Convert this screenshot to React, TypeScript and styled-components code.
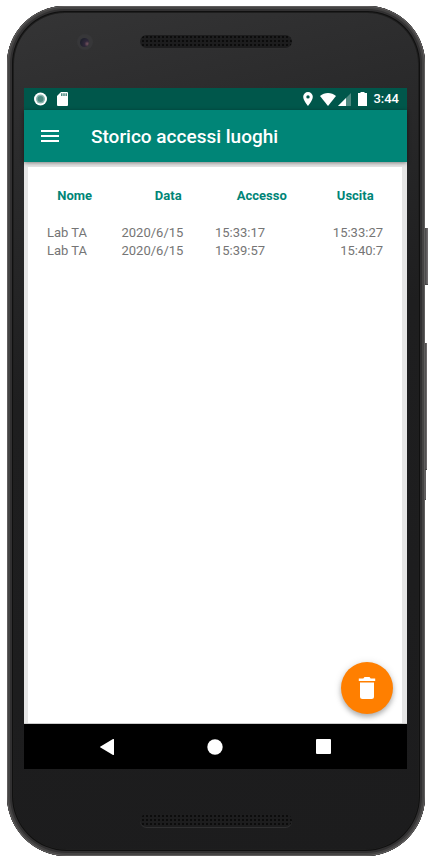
import React from "react";
import styled, { createGlobalStyle } from "styled-components";

const GlobalStyle = createGlobalStyle`
  * { box-sizing: border-box; }
  body { margin: 0; background: #fff; font-family: Roboto, "Noto Sans", sans-serif; }
  button { border: 0; padding: 0; background: none; color: inherit; font: inherit; cursor: pointer; }
  svg { display: block; }
`;

const Page = styled.div`
  display: flex;
  min-height: 100vh;
  padding: 6px 3px 1px 7px;
`;

const Phone = styled.div`
  position: relative;
  flex: 1;
  display: flex;
  flex-direction: column;
  padding: 0 18px 0 17px;
  border-radius: 58px 58px 60px 60px;
  background: linear-gradient(165deg, #353536 0%, #29292a 20%, #1e1e1f 42%, #1c1c1d 100%);
  box-shadow:
    inset 0 0 0 1px #5f5d5d,
    inset 0 0 0 3px #444343,
    inset 0 0 0 5px #313031,
    inset 0 0 0 6px #101010,
    inset 0 0 0 7px #1e1e1e;
`;

const Bezel = styled.div<{ $height: number; $top: number }>`
  display: grid;
  grid-template-columns: 1fr 152px 1fr;
  justify-items: center;
  align-items: start;
  height: ${(p) => p.$height}px;
  padding-top: ${(p) => p.$top}px;
`;

const Camera = styled.div`
  display: grid;
  place-items: center;
  width: 16px;
  height: 16px;
  margin: -1px 0 0 6px;
  border-radius: 50%;
  background: #373739;
`;

const Lens = styled.div`
  width: 9px;
  height: 9px;
  border-radius: 50%;
  background: radial-gradient(circle at 80% 65%, #75545e 0, #30283b 30%, #20212d 70%);
`;

const Speaker = styled.div`
  grid-column: 2;
  width: 100%;
  height: 13px;
  border-radius: 7px;
  background: radial-gradient(circle, #0c0c0c 1px, transparent 1px) 1px 0 / 4px 4px #1d1d1e;
  box-shadow: 0 1px 0 #303031;
`;

const SideButton = styled.div<{ $top: number; $height: number; $width: number }>`
  position: absolute;
  left: 100%;
  top: ${(p) => p.$top}px;
  width: ${(p) => p.$width}px;
  height: ${(p) => p.$height}px;
  background: linear-gradient(90deg, #444, #777375);
  border-bottom: 1px solid #444;
`;

const Screen = styled.div`
  flex: 1;
  display: flex;
  flex-direction: column;
  background: #e6e6e6;
`;

const StatusBar = styled.div`
  display: flex;
  justify-content: space-between;
  align-items: center;
  height: 22px;
  padding: 0 8px 0 10px;
  background: #00574b;
  color: #fff;
  font-size: 13px;
  font-weight: 500;
  line-height: 22px;
`;

const StatusGroup = styled.div<{ $gap: number }>`
  display: flex;
  align-items: center;
  gap: ${(p) => p.$gap}px;
`;

const AppBar = styled.header`
  position: relative;
  display: flex;
  align-items: center;
  gap: 29px;
  height: 52px;
  padding: 0 13px;
  background: #008577;
  color: #fff;
  box-shadow: 0 1px 4px rgba(0, 0, 0, 0.45);
`;

const Title = styled.h1`
  margin: 0;
  padding-top: 2px;
  font-size: 19px;
  font-weight: 500;
  line-height: 24px;
`;

const IconButton = styled.button`
  width: 25px;
  height: 24px;
`;

const Content = styled.main`
  position: relative;
  flex: 1;
  display: flex;
  padding: 5px 5px 0 4px;
  border-bottom: 1px solid #ccc;
`;

const Card = styled.section`
  flex: 1;
  background: #fff;
  padding-top: 20px;
`;

const Table = styled.table`
  width: 100%;
  table-layout: fixed;
  border-collapse: collapse;
  font-size: 13px;
  line-height: 18px;
`;

const HeadCell = styled.th`
  padding: 0 0 19px;
  color: #008577;
  font-weight: 700;
  text-align: center;
`;

const Cell = styled.td`
  padding: 0;
  color: #757575;
  text-align: left;
  white-space: nowrap;
  &:first-child { padding-left: 19px; }
  &:last-child { padding-right: 19px; text-align: right; }
`;

const Fab = styled.button`
  position: absolute;
  right: 14px;
  bottom: 9px;
  display: grid;
  place-items: center;
  width: 52px;
  height: 52px;
  border-radius: 50%;
  background: #ff7f00;
  color: #fff;
  box-shadow: 0 3px 5px rgba(0, 0, 0, 0.26), 0 1px 8px rgba(0, 0, 0, 0.12);
`;

const NavBar = styled.nav`
  display: flex;
  justify-content: center;
  height: 45px;
  padding-right: 1px;
  background: #000;
  color: #fff;
`;

const NavButton = styled.button`
  display: grid;
  place-items: center;
  width: 108px;
`;

const headers = ["Nome", "Data", "Accesso", "Uscita"];
const visits = [
  ["Lab TA", "2020/6/15", "15:33:17", "15:33:27"],
  ["Lab TA", "2020/6/15", "15:39:57", "15:40:7"],
];

export default function App() {
  return (
    <>
      <GlobalStyle />
      <Page>
        <Phone>
          <SideButton $top={222} $height={57} $width={3} />
          <SideButton $top={337} $height={127} $width={2} />
          <SideButton $top={464} $height={30} $width={1} />
          <Bezel $height={82} $top={29}>
            <Camera><Lens /></Camera>
            <Speaker />
          </Bezel>
          <Screen>
            <StatusBar>
              <StatusGroup $gap={10}>
                <svg width="13" height="14" viewBox="0 0 13 14">
                  <circle cx="6.500" cy="7" r="6.500" fill="#fff" />
                  <circle cx="6.500" cy="7" r="4.5" fill="#8ab5ae" />
                  <circle cx="6.500" cy="7" r="3" fill="#4c897f" />
                </svg>
                <svg width="11" height="14" viewBox="0 0 11 14">
                  <path fill="#fff" d="M4 0h6a1 1 0 0 1 1 1v12a1 1 0 0 1-1 1H1a1 1 0 0 1-1-1V4z" />
                  <path stroke="#327a70" strokeWidth="1.3" d="M4.8 1.3v2.8M7 1.3v2.8M9.2 1.3v2.8" />
                </svg>
              </StatusGroup>
              <StatusGroup $gap={6}>
                <StatusGroup $gap={7}>
                  <svg width="10" height="14" viewBox="0 0 10 14">
                    <path fill="#fff" fillRule="evenodd" d="M5 0a4.8 4.8 0 0 0-4.8 4.8C.2 8.4 5 14 5 14s4.8-5.6 4.8-9.2A4.8 4.8 0 0 0 5 0m0 3.2a1.7 1.7 0 1 1 0 3.4 1.7 1.7 0 0 1 0-3.4" />
                  </svg>
                  <StatusGroup $gap={2}>
                    <svg width="16" height="13" viewBox="0 0 16 13">
                      <path fill="#fff" d="M0 3C4.500-1 11.500-1 16 3L8 13z" />
                    </svg>
                    <svg width="13" height="13" viewBox="0 0 13 13">
                      <path fill="#4d8980" d="M13 0v13H0z" />
                      <path fill="#fff" d="M8 5v8H0z" />
                    </svg>
                  </StatusGroup>
                  <svg width="9" height="14" viewBox="0 0 9 14">
                    <path fill="#fff" d="M2.500 0h4v1H9v13H0V1h2.500z" />
                  </svg>
                </StatusGroup>
                <span>3:44</span>
              </StatusGroup>
            </StatusBar>
            <AppBar>
              <IconButton aria-label="Menu">
                <svg width="25" height="24" viewBox="0 0 25 24">
                  <path stroke="#fff" strokeWidth="2" d="M4 7h18M4 12h18M4 17h18" />
                </svg>
              </IconButton>
              <Title>Storico accessi luoghi</Title>
            </AppBar>
            <Content>
              <Card>
                <Table>
                  <thead>
                    <tr>{headers.map((h) => <HeadCell key={h} scope="col">{h}</HeadCell>)}</tr>
                  </thead>
                  <tbody>
                    {visits.map((row) => (
                      <tr key={row[2]}>{row.map((value, i) => <Cell key={i}>{value}</Cell>)}</tr>
                    ))}
                  </tbody>
                </Table>
              </Card>
              <Fab aria-label="Elimina">
                <svg width="18" height="22" viewBox="0 0 18 22">
                  <path fill="currentColor" d="M2 5.500h14V19.500a2.500 2.500 0 0 1-2.500 2.500h-9A2.500 2.500 0 0 1 2 19.500zM.800 1.500h4.500L6.500 0h5l1.200 1.500h4.500v2.500H.800z" />
                </svg>
              </Fab>
            </Content>
            <NavBar>
              <NavButton aria-label="Indietro">
                <svg width="14" height="16" viewBox="0 0 14 16">
                  <path fill="currentColor" d="M13 0a.8.8 0 0 1 1 .8v14.400a.8.8 0 0 1-1 .8L.500 8.600a.7.7 0 0 1 0-1.200z" />
                </svg>
              </NavButton>
              <NavButton aria-label="Home">
                <svg width="16" height="16" viewBox="0 0 16 16"><circle cx="8" cy="8" r="7.700" fill="currentColor" /></svg>
              </NavButton>
              <NavButton aria-label="Recenti">
                <svg width="15" height="15" viewBox="0 0 15 15"><rect width="15" height="15" rx="1" fill="currentColor" /></svg>
              </NavButton>
            </NavBar>
          </Screen>
          <Bezel $height={87} $top={45}><Speaker /></Bezel>
        </Phone>
      </Page>
    </>
  );
}
